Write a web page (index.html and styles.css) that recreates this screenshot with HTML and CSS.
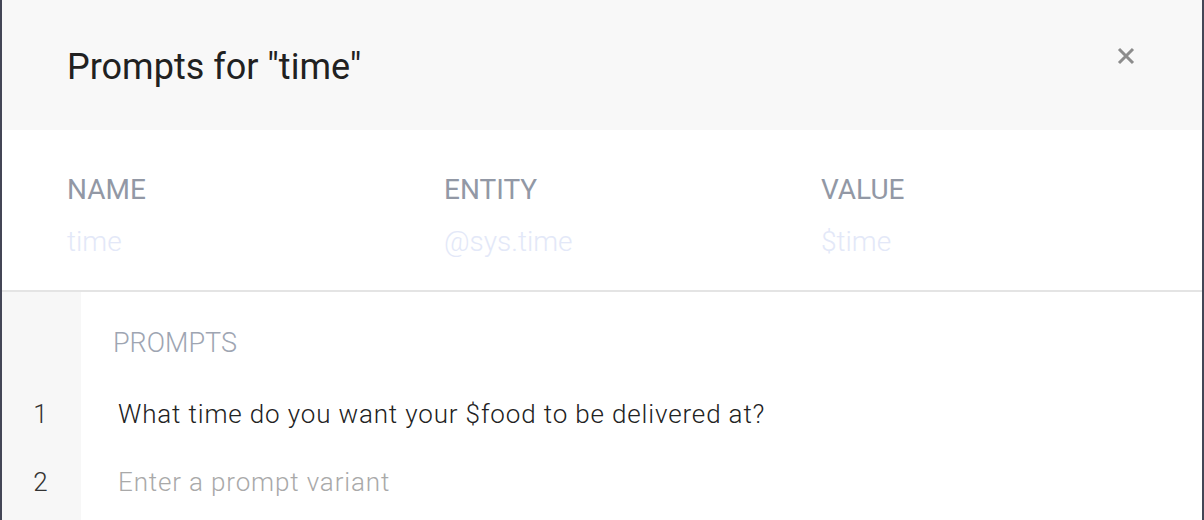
FILE: index.html
```html
<!DOCTYPE html>
<html>
<head>
<meta charset="utf-8">
<link rel="stylesheet" href="styles.css">
</head>
<body>
<div class="backdrop">
  <div class="modal">
    <div class="modal-header">
      <h1 class="title">Prompts for "time"</h1>
      <button class="close" aria-label="Close">
        <svg width="18" height="18" viewBox="0 0 18 18"><path d="M2 2 L16 16 M16 2 L2 16" stroke="#8c8c8c" stroke-width="3" fill="none"/></svg>
      </button>
    </div>
    <div class="params">
      <div class="param">
        <div class="label">NAME</div>
        <div class="value">time</div>
      </div>
      <div class="param">
        <div class="label">ENTITY</div>
        <div class="value">@sys.time</div>
      </div>
      <div class="param">
        <div class="label">VALUE</div>
        <div class="value">$time</div>
      </div>
    </div>
    <div class="prompts">
      <div class="gutter">
        <div class="gutter-head"></div>
        <div class="num">1</div>
        <div class="num">2</div>
      </div>
      <div class="prompt-list">
        <div class="prompts-label">PROMPTS</div>
        <div class="prompt">What time do you want your $food to be delivered at?</div>
        <div class="prompt placeholder">Enter a prompt variant</div>
      </div>
    </div>
  </div>
</div>
</body>
</html>
```
FILE: styles.css
```css
* { box-sizing: border-box; }
html, body { margin: 0; padding: 0; }
body {
  font-family: Roboto, "Noto Sans", sans-serif;
  background: #444656;
  width: 1204px;
  height: 520px;
  overflow: hidden;
}
.backdrop {
  padding: 0 2px;
  height: 520px;
}
.modal {
  background: #ffffff;
  height: 520px;
  display: flex;
  flex-direction: column;
}
.modal-header {
  background: #f8f8f8;
  height: 130px;
  flex: none;
  display: flex;
  justify-content: space-between;
  align-items: flex-start;
  padding: 0 67px 0 65px;
}
.title {
  margin: 45px 0 0;
  font-size: 36px;
  font-weight: 400;
  color: #212121;
  line-height: 44px;
}
.close {
  margin-top: 47px;
  background: none;
  border: 0;
  padding: 0;
  width: 18px;
  height: 18px;
  display: flex;
}
.params {
  flex: none;
  display: grid;
  grid-template-columns: 377px 377px 1fr;
  padding: 42px 0 0 65px;
  height: 162px;
  border-bottom: 2px solid #e4e4e4;
}
.label {
  font-size: 28px;
  font-weight: 400;
  color: #9298a5;
  line-height: 36px;
}
.value {
  font-size: 28px;
  font-weight: 300;
  color: #e3e8f8;
  line-height: 36px;
  margin-top: 16px;
}
.prompts {
  flex: 1;
  display: flex;
}
.gutter {
  width: 79px;
  background: #f7f7f7;
  display: flex;
  flex-direction: column;
}
.gutter-head { height: 87px; }
.num {
  height: 68px;
  text-align: center;
  font-size: 26px;
  font-weight: 300;
  color: #333333;
  line-height: 70px;
  padding-right: 2px;
}
.prompt-list {
  flex: 1;
  padding-left: 31px;
}
.prompts-label {
  height: 87px;
  padding-top: 33px;
  font-size: 27px;
  font-weight: 300;
  color: #9ea5b2;
  line-height: 36px;
  padding-left: 1px;
}
.prompt {
  height: 68px;
  line-height: 70px;
  font-size: 26px;
  font-weight: 300;
  letter-spacing: 0.85px;
  color: #222222;
  padding-left: 6px;
}
.prompt.placeholder { color: #a9a9a9; }
```
